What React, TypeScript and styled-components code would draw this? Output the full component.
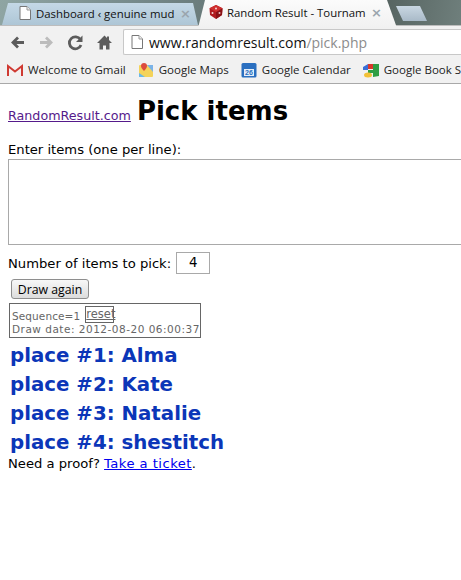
import React from "react";
import styled, { createGlobalStyle } from "styled-components";

const Global = createGlobalStyle`
  html, body { margin: 0; padding: 0; background: #fff; }
  body { width: 461px; height: 580px; overflow: hidden; }
`;

const Frame = styled.div`
  width: 461px;
  height: 580px;
  overflow: hidden;
  display: flex;
  flex-direction: column;
  font-family: "DejaVu Sans", Verdana, sans-serif;
  color: #000;
`;

const TabStrip = styled.div`
  height: 25px;
  flex: none;
  display: flex;
  align-items: flex-end;
  padding-left: 2px;
  background: linear-gradient(100deg, #8fa5a3 0%, #75898a 30%, #5c6a68 62%, #46524f 72%, #6f7f7c 100%);
  position: relative;
  z-index: 1;
`;

const Tab = styled.div`
  height: 22px;
  width: 196px;
  flex: none;
  display: flex;
  align-items: center;
  box-sizing: border-box;
  padding: 0 7px 2px 15px;
  gap: 3px;
  background: linear-gradient(#c4d8e6, #aec6d6);
  clip-path: polygon(6px 0, calc(100% - 5px) 0, 100% 100%, 0 100%);
  font-family: "Open Sans", "Noto Sans", sans-serif;
  font-size: 11.4px;
  color: #111;
`;

const ActiveTab = styled(Tab)`
  height: 28px;
  width: 199px;
  margin-bottom: -3px;
  padding: 0 15px 4px 10px;
  background: linear-gradient(#fbfbfb, #f1f1f1);
  clip-path: polygon(7px 0, calc(100% - 10px) 0, 100% 100%, 0 100%);
`;

const TabTitle = styled.span`
  flex: 1;
  white-space: nowrap;
`;

const TabClose = styled.span`
  flex: none;
  color: #9aa5ad;
  font-size: 13px;
  line-height: 1;
  font-family: "DejaVu Sans", sans-serif;
  font-weight: bold;
`;

const NewTab = styled.div`
  width: 31px;
  height: 15px;
  margin: 0 0 4px -1px;
  flex: none;
  background: linear-gradient(#c9d7e2, #a9bac8);
  clip-path: polygon(0 0, 24px 0, 100% 100%, 7px 100%);
`;

const Toolbar = styled.div`
  height: 31px;
  flex: none;
  display: flex;
  align-items: center;
  background: #f1f1f1;
  border-top: 1px solid #bdbdbd;
  box-sizing: border-box;
  padding: 2px 0 0 9px;
`;

const NavIcon = styled.svg`
  width: 17px;
  height: 17px;
  flex: none;
  margin-right: 12px;
  display: block;
`;

const Omnibox = styled.div`
  flex: 1;
  height: 26px;
  box-sizing: border-box;
  margin-right: -6px;
  margin-left: -2px;
  display: flex;
  align-items: center;
  gap: 4px;
  padding-left: 5px;
  background: #fff;
  border: 1px solid #c8c8c8;
  border-right: none;
  border-radius: 2px 0 0 2px;
  font-family: "Open Sans", "Noto Sans", sans-serif;
  font-size: 14px;
  color: #111;
  white-space: nowrap;
`;

const UrlPath = styled.span`
  color: #8c8c8c;
`;

const BookmarkBar = styled.div`
  height: 28px;
  flex: none;
  display: flex;
  align-items: center;
  gap: 12px;
  padding-left: 7px;
  background: #f1f1f1;
  border-bottom: 1px solid #a9a9a9;
  box-sizing: border-box;
  white-space: nowrap;
  overflow: hidden;
  font-family: "Open Sans", "Noto Sans", sans-serif;
  font-size: 11.5px;
  color: #222;
`;

const Bookmark = styled.div`
  display: flex;
  align-items: center;
  gap: 5px;
  flex: none;
`;

const Favicon = styled.svg`
  width: 16px;
  height: 16px;
  flex: none;
  display: block;
`;

const Page = styled.main`
  flex: 1;
  background: #fff;
  padding: 0 0 0 8px;
  font-size: 13.15px;
  line-height: 16px;
  overflow: hidden;
`;

const Header = styled.div`
  height: 57px;
  display: flex;
  align-items: baseline;
  gap: 6px;
  padding-top: 8px;
  box-sizing: border-box;
`;

const SiteLink = styled.a`
  color: #551a8b;
  text-decoration: underline;
  font-size: 12.7px;
`;

const Title = styled.h1`
  margin: 0;
  font-size: 26px;
  line-height: 38px;
  font-weight: bold;
`;

const FieldLabel = styled.div`
  height: 18px;
  line-height: 18px;
`;

const ItemsBox = styled.div`
  width: 480px;
  height: 86px;
  box-sizing: border-box;
  border: 1px solid #a9a9a9;
  background: #fff;
`;

const CountRow = styled.div`
  display: flex;
  align-items: center;
  gap: 5px;
  margin-top: 7px;
  height: 22px;
`;

const CountLabel = styled.span`
  padding-top: 1px;
`;

const CountInput = styled.div`
  width: 34px;
  height: 22px;
  box-sizing: border-box;
  border: 1px solid #a9a9a9;
  display: flex;
  align-items: center;
  justify-content: center;
  font-size: 13.3px;
`;

const DrawButton = styled.button`
  display: block;
  width: 78px;
  height: 20px;
  margin: 5px 0 0 3px;
  padding: 0;
  box-sizing: border-box;
  border: 1px solid #8e8e8e;
  border-radius: 3px;
  background: linear-gradient(#f7f7f7, #dcdcdc);
  font-family: "Open Sans", "Noto Sans", sans-serif;
  font-size: 12.3px;
  color: #000;
`;

const SeqBox = styled.div`
  width: 192px;
  height: 35px;
  margin: 4px 0 0 1px;
  box-sizing: border-box;
  border: 1px solid #666;
  padding: 2px 0 0 2px;
  font-size: 10.5px;
  line-height: 13px;
  color: #666;
  white-space: nowrap;
  letter-spacing: 0.5px;
`;

const SeqLine = styled.div`
  display: flex;
  align-items: flex-end;
  gap: 5px;
  height: 17px;
  letter-spacing: 0.1px;
`;

const ResetLink = styled.a`
  display: block;
  width: 29px;
  height: 17px;
  box-sizing: border-box;
  border: 1px solid #666;
  text-align: center;
  font-size: 11.5px;
  line-height: 15px;
  letter-spacing: 0;
  color: #666;
  text-decoration: underline;
`;

const PlaceList = styled.div`
  margin: 3px 0 0 2px;
`;

const Place = styled.div`
  font-size: 19.8px;
  line-height: 29px;
  font-weight: bold;
  color: #0b36b8;
  white-space: nowrap;
`;

const Proof = styled.div`
  margin-top: -1px;
  line-height: 16px;
`;

const ProofLink = styled.a`
  color: #0000ee;
  text-decoration: underline;
  letter-spacing: 0.45px;
`;

const PageIcon = () => (
  <Favicon viewBox="0 0 16 16">
    <path d="M3 1.5h7l3.500 3.500v9.500H3z" fill="#fff" stroke="#777" />
    <path d="M10 1.500V5h3.500" fill="#eee" stroke="#999" />
  </Favicon>
);

const Dice = () => (
  <Favicon viewBox="0 0 16 16">
    <path d="M8 1l6.500 3.200L14 11l-6 4-6-4-.5-6.800z" fill="#b01c20" />
    <path d="M8 8l6.500-3.800L14 11l-6 4z" fill="#8a1216" />
    <path d="M1.500 4.200L8 1l6.500 3.200L8 8z" fill="#cf2f2f" />
    <circle cx="8" cy="4.500" r="1" fill="#f3d6d6" />
    <circle cx="4.500" cy="9" r="1" fill="#f3d6d6" />
    <circle cx="11.500" cy="9" r="1" fill="#e8c4c4" />
  </Favicon>
);

export default function App() {
  return (
    <Frame>
      <Global />
      <TabStrip>
        <Tab>
          <PageIcon />
          <TabTitle>Dashboard ‹ genuine mud</TabTitle>
          <TabClose>×</TabClose>
        </Tab>
        <ActiveTab>
          <Dice />
          <TabTitle>Random Result - Tournam</TabTitle>
          <TabClose>×</TabClose>
        </ActiveTab>
        <NewTab />
      </TabStrip>
      <Toolbar>
        <NavIcon viewBox="0 0 17 17">
          <path d="M15 8.500H5M9 3.500l-5 5 5 5" fill="none" stroke="#5c5c5c" strokeWidth="2.800" />
        </NavIcon>
        <NavIcon viewBox="0 0 17 17">
          <path d="M2 8.500h10M8 3.500l5 5-5 5" fill="none" stroke="#bcbcbc" strokeWidth="2.800" />
        </NavIcon>
        <NavIcon viewBox="0 0 17 17">
          <path d="M14 11a6 6 0 1 1-.6-5.500" fill="none" stroke="#5c5c5c" strokeWidth="2.800" />
          <path d="M15.500 1.500v6.500H9z" fill="#5c5c5c" />
        </NavIcon>
        <NavIcon viewBox="0 0 17 17">
          <path d="M8.500 1.500L1 9h2.500v6.500h3.500v-4h3v4h3.500V9H16l-3-3V2.500h-2v1.500z" fill="#5c5c5c" />
        </NavIcon>
        <Omnibox>
          <PageIcon />
          <span>
            www.randomresult.com<UrlPath>/pick.php</UrlPath>
          </span>
        </Omnibox>
      </Toolbar>
      <BookmarkBar>
        <Bookmark>
          <Favicon viewBox="0 0 16 16">
            <rect x="0" y="3" width="16" height="11" fill="#f4f1f1" />
            <path d="M1 14V4l7 5.500L15 4v10" fill="none" stroke="#cf3a32" strokeWidth="2" />
          </Favicon>
          Welcome to Gmail
        </Bookmark>
        <Bookmark>
          <Favicon viewBox="0 0 16 16">
            <rect x="1" y="3" width="14" height="12" rx="1" fill="#f4d35a" />
            <path d="M9 3h6v7z" fill="#7bb3e8" />
            <path d="M1 11l6 4H1z" fill="#6bb8e8" />
            <path d="M6 1a3 3 0 0 1 3 3c0 2-3 5-3 5S3 6 3 4a3 3 0 0 1 3-3z" fill="#dc4b3e" />
          </Favicon>
          Google Maps
        </Bookmark>
        <Bookmark>
          <Favicon viewBox="0 0 16 16">
            <rect x="0.500" y="1" width="15" height="14.500" rx="1.500" fill="#2a6fc0" />
            <rect x="3" y="7" width="10" height="7" fill="#e4eef8" />
            <text x="8" y="13" textAnchor="middle" fontSize="7" fontWeight="bold" fill="#2a6fc0" fontFamily="Liberation Sans">26</text>
          </Favicon>
          Google Calendar
        </Bookmark>
        <Bookmark>
          <Favicon viewBox="0 0 16 16">
            <path d="M0 5l5-3v6H0z" fill="#3b6fd6" />
            <path d="M5 2h5v5H5z" fill="#d8382c" />
            <path d="M10 2h6v12l-6 1z" fill="#2f9e44" />
            <path d="M5 8h5v3H5z" fill="#2f9e44" />
            <ellipse cx="5" cy="13" rx="4" ry="2.500" fill="#f2c037" />
          </Favicon>
          Google Book S
        </Bookmark>
      </BookmarkBar>
      <Page>
        <Header>
          <SiteLink>RandomResult.com</SiteLink>
          <Title>Pick items</Title>
        </Header>
        <FieldLabel>Enter items (one per line):</FieldLabel>
        <ItemsBox />
        <CountRow>
          <CountLabel>Number of items to pick:</CountLabel>
          <CountInput>4</CountInput>
        </CountRow>
        <DrawButton>Draw again</DrawButton>
        <SeqBox>
          <SeqLine>
            Sequence=1
            <ResetLink>reset</ResetLink>
          </SeqLine>
          Draw date: 2012-08-20 06:00:37
        </SeqBox>
        <PlaceList>
          <Place>place #1: Alma</Place>
          <Place>place #2: Kate</Place>
          <Place>place #3: Natalie</Place>
          <Place>place #4: shestitch</Place>
        </PlaceList>
        <Proof>
          Need a proof? <ProofLink>Take a ticket</ProofLink>.
        </Proof>
      </Page>
    </Frame>
  );
}
